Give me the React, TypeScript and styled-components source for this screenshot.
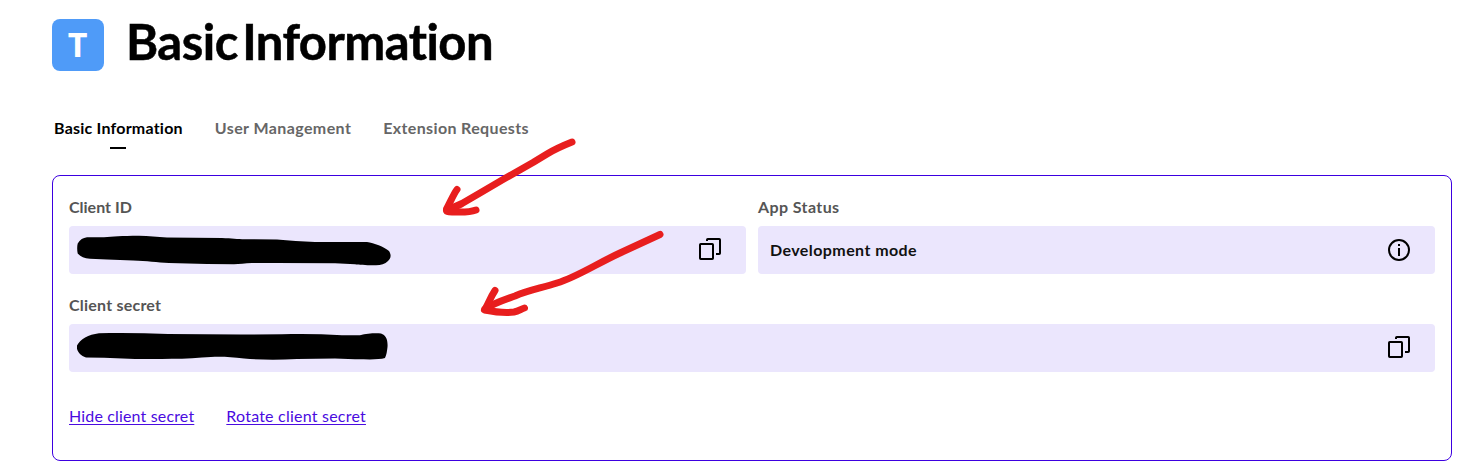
import React from "react";
import styled, { createGlobalStyle } from "styled-components";

const GlobalStyle = createGlobalStyle`
  * { box-sizing: border-box; }
  body {
    margin: 0;
    background: #fff;
    color: #000;
    font-family: Lato, "Liberation Sans", sans-serif;
    font-size: 16px;
    line-height: 24px;
  }
`;

const Page = styled.main`
  position: relative;
  height: 472px;
  padding: 19px 23px 0 52px;
  overflow: hidden;
`;

const Header = styled.header`
  display: flex;
  gap: 22px;
  height: 52px;
`;

const AppBadge = styled.div`
  width: 52px;
  height: 52px;
  padding-right: 1px;
  border-radius: 8px;
  background: #4f9bf8;
  color: #fff;
  font: 700 34px/51px "Open Sans", sans-serif;
  text-align: center;
`;

const Title = styled.h1`
  margin: 0;
  font-size: 49px;
  font-weight: 700;
  line-height: 44px;
  letter-spacing: -0.52px;
  word-spacing: -7px;
  white-space: nowrap;
  -webkit-text-stroke: 0.5px #000;
`;

const Tabs = styled.nav`
  display: flex;
  gap: 32px;
  margin: 45px 0 26px 2px;
`;

const Tab = styled.a<{ $active?: boolean; $spacing: number }>`
  display: flex;
  flex-direction: column;
  align-items: center;
  height: 33px;
  font-weight: 700;
  line-height: 24px;
  letter-spacing: ${(p) => p.$spacing}px;
  color: ${(p) => (p.$active ? "#000" : "#666")};
  &::after {
    content: "";
    flex: none;
    width: 16px;
    height: 2px;
    margin-top: 7px;
    background: ${(p) => (p.$active ? "#000" : "transparent")};
  }
`;

const Panel = styled.section`
  height: 286px;
  padding: 19px 16px 0;
  border: 1px solid #3d00e0;
  border-radius: 8px;
`;

const FieldRow = styled.div`
  display: flex;
  gap: 12px;
  margin-bottom: 19px;
`;

const Field = styled.div`
  flex: 1;
`;

const Label = styled.div<{ $spacing: number }>`
  height: 24px;
  margin-bottom: 7px;
  font-weight: 700;
  color: #555;
  letter-spacing: ${(p) => p.$spacing}px;
`;

const Value = styled.div<{ $inset: number }>`
  display: flex;
  align-items: center;
  justify-content: space-between;
  height: 48px;
  padding: 0 24px 0 ${(p) => p.$inset}px;
  border-radius: 4px;
  background: #ebe6fd;
  font-weight: 700;
  color: #111;
`;

const ValueText = styled.span`
  letter-spacing: 0.42px;
`;

const Links = styled.div`
  display: flex;
  gap: 32px;
  margin-top: 32px;
`;

const Link = styled.a<{ $spacing: number }>`
  color: #4a0be0;
  text-decoration: underline;
  text-underline-offset: 2px;
  letter-spacing: ${(p) => p.$spacing}px;
`;

const Annotations = styled.svg`
  position: absolute;
  inset: 0;
  pointer-events: none;
`;

const CopyIcon = () => (
  <svg width="24" height="24" viewBox="0 0 24 24" fill="none" stroke="#000" strokeWidth="2" strokeLinejoin="round">
    <rect x="2" y="6" width="13" height="15" rx="0.8" />
    <path d="M9 3V1.800Q9 1 9.800 1H21.200Q22 1 22 1.800V15.200Q22 16 21.200 16H18" />
  </svg>
);

const InfoIcon = () => (
  <svg width="24" height="24" viewBox="0 0 24 24" fill="none" stroke="#000" strokeWidth="2">
    <circle cx="12" cy="12" r="10" />
    <path d="M12 6V8M12 10V18" />
  </svg>
);

const IdScribble = () => (
  <svg width="316" height="48" viewBox="0 0 316 48">
    <path d="M10 11.300H27C36 10.500 44 9.700 62 9.700C72 10 80 11 90 11.500L145 12C155 12.500 160 13 168 13.300L200 13.500C212 14.500 225 15.500 238 16L290 16C297 16.800 307 21 312 25C314.500 29 314 32 311 35C308 38 304 39 299 39.300C292 39.500 282 39 278 38.300L258 37.300L200 37L175 37C168 37.500 162 38 157 38.300L130 38L92 37C80 36.300 70 35 56 34.500L30 33.500L13 32.700C7 32.500 3 30 .7 27.500C0 24 0 20 .7 17.500C3 13.500 6 12 10 11.300Z" />
  </svg>
);

const SecretScribble = () => (
  <svg width="312" height="48" viewBox="0 0 312 48">
    <path d="M22 9.200C45 8.800 68 9 91 10L164 10.500L205 10.200C225 9.500 245 10 265 11.200H283C290 9.500 298 9 304 9.500C309 11 311 16 310.500 23C310 27 309.500 31 308 34C302 36 290 35.200 278 35.300L258 34.500L220 35C202 36 184 36 167 34.500C150 32.500 140 32.500 125 33.500C112 35 98 34.500 85 35L58 35L27 33.700L9 33.500C3 31.500 0 27 -.4 22.500C2 16 11 10.500 22 9.200Z" />
  </svg>
);

export default function App() {
  return (
    <Page>
      <GlobalStyle />
      <Header>
        <AppBadge>T</AppBadge>
        <Title>Basic Information</Title>
      </Header>
      <Tabs>
        <Tab $active $spacing={0.22}>Basic Information</Tab>
        <Tab $spacing={0.4}>User Management</Tab>
        <Tab $spacing={0.36}>Extension Requests</Tab>
      </Tabs>
      <Panel>
        <FieldRow>
          <Field>
            <Label $spacing={0}>Client ID</Label>
            <Value $inset={8}>
              <IdScribble />
              <CopyIcon />
            </Value>
          </Field>
          <Field>
            <Label $spacing={0.4}>App Status</Label>
            <Value $inset={12}>
              <ValueText>Development mode</ValueText>
              <InfoIcon />
            </Value>
          </Field>
        </FieldRow>
        <FieldRow>
          <Field>
            <Label $spacing={0.22}>Client secret</Label>
            <Value $inset={8}>
              <SecretScribble />
              <CopyIcon />
            </Value>
          </Field>
        </FieldRow>
        <Links>
          <Link $spacing={0.16}>Hide client secret</Link>
          <Link $spacing={0.22}>Rotate client secret</Link>
        </Links>
      </Panel>
      <Annotations width="1475" height="472" viewBox="0 0 1475 472" fill="none" stroke="#e81e1e" strokeWidth="7" strokeLinecap="round" strokeLinejoin="round">
        <path d="M572 142C562 146 555 149 547 154L533 162.500L503 179.500L480 193L462 203.500C457 206 452 208 447 210" />
        <path d="M457 189.500C453 195 450 203 446.500 209C446 212 448 212 452 212C460 212 468 213 476 210" />
        <path d="M660 234.500L620 253C596 264 577 277 557 283C542 288 529 290 515 296C504 300 494 303 485 309" />
        <path d="M495 290.500C490 298 488 305 484.500 310C495 312 507 313 514 312C519 311 521 309 524.500 308" />
      </Annotations>
    </Page>
  );
}
